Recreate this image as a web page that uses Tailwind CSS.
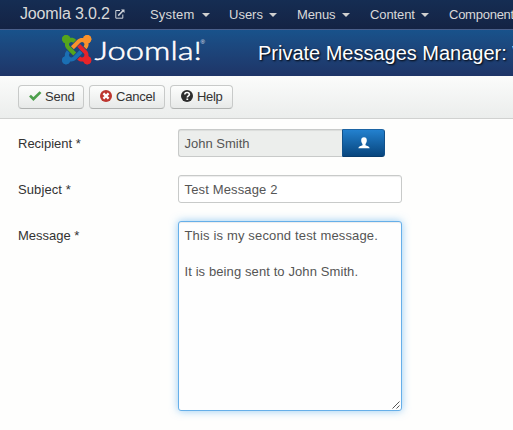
<!DOCTYPE html>
<html lang="en">
<head>
<meta charset="utf-8">
<title>Private Messages Manager</title>
<script src="https://cdn.jsdelivr.net/npm/@tailwindcss/browser@4"></script>
</head>
<body class="w-[513px] h-[430px] overflow-hidden bg-[#fefefd] font-['Liberation_Sans',sans-serif] text-[13px] leading-[18px] text-[#333]">
<nav class="flex h-[29px] w-full items-center overflow-hidden bg-linear-to-b from-[#152d53] to-[#142344] pl-5 text-[#d9d9d9]">
  <a class="flex w-[130px] shrink-0 items-center whitespace-nowrap text-[16px]"><span class="-mt-px tracking-[-0.15px]">Joomla 3.0.2</span>
    <svg class="ml-[5px] -mt-px" width="10" height="10" viewBox="0 0 10 10" fill="none" stroke="#d0d4da" stroke-width="1"><path d="M5 1.5H.8v7.7h7V5.5"/><path d="M3.2 6.6 8.5 1.3" stroke-width="1.5"/><path d="M6 .6h3.5V4z" fill="#d0d4da" stroke="none"/></svg></a>
  <a class="flex w-[79px] shrink-0 items-center gap-[7px]"><span class="tracking-[0.2px]">System</span><i class="border-x-4 border-t-4 border-x-transparent border-t-[#d0d0d0]"></i></a>
  <a class="flex w-[68px] shrink-0 items-center gap-[6px]"><span class="tracking-[0px]">Users</span><i class="border-x-4 border-t-4 border-x-transparent border-t-[#d0d0d0]"></i></a>
  <a class="flex w-[73px] shrink-0 items-center gap-[6px]"><span class="tracking-[-0.1px]">Menus</span><i class="border-x-4 border-t-4 border-x-transparent border-t-[#d0d0d0]"></i></a>
  <a class="flex w-[79px] shrink-0 items-center gap-[6px]"><span class="tracking-[-0.1px]">Content</span><i class="border-x-4 border-t-4 border-x-transparent border-t-[#d0d0d0]"></i></a>
  <a class="shrink-0 tracking-[-0.25px]">Component</a>
</nav>
<header class="flex h-[47px] w-full overflow-hidden border-t border-[#4a5f8b] bg-linear-to-b from-[#18528b] to-[#1e3567]">
  <svg class="ml-[60px] mt-[3px] shrink-0" width="150" height="36" viewBox="60 33 150 36">
    <defs><g id="arm"><circle cx="3.5" cy="20.5" r="3.4"/><path d="M16.719 14.759L14.22 17.26l-2.37 2.37-.462.466c-1.368 1.365-3.297 1.83-5.047 1.397-.327 1.424-1.604 2.49-3.13 2.49C1.438 23.983 0 22.547 0 20.772c0-1.518 1.055-2.789 2.469-3.123-.446-1.76.016-3.705 1.396-5.08l.179-.18 2.37 2.37-.184.181c-.769.779-.769 2.024 0 2.789.771.78 2.022.78 2.787 0l.465-.465 2.367-2.371 2.502-2.506z"/></g></defs>
    <g transform="translate(62 35) scale(1.225)">
      <use href="#arm" fill="#1b6fb3"/>
      <use href="#arm" fill="#55a51c" transform="rotate(90 12 12)"/>
      <use href="#arm" fill="#f9922c" transform="rotate(180 12 12)"/>
      <use href="#arm" fill="#e5242a" transform="rotate(270 12 12)"/>
    </g>
    <text transform="translate(94.500 59.700) scale(1.22 1)" x="0" y="0" font-family="Lato,sans-serif" font-weight="300" font-size="26" fill="#fff" stroke="#fff" stroke-width=".5" textLength="88" lengthAdjust="spacingAndGlyphs">Joomla!</text>
    <text x="200.500" y="43.500" font-family="Liberation Sans,sans-serif" font-size="6" fill="#e2e8f0">®</text>
  </svg>
  <h1 class="ml-[48px] mt-[9px] flex whitespace-nowrap text-[20px] leading-[28px] tracking-[-0.01px] text-white [text-shadow:1px_1px_2px_#000]">Private Messages Manager: W</h1>
</header>
<div class="flex h-[43px] gap-[5px] border-b border-[#d0d1d0] bg-linear-to-b from-[#fbfcfb] to-[#ebedec] pl-[18px] pt-[9px]">
  <button class="flex h-[24px] w-[66px] items-center rounded-[4px] border border-[#c8cac9] border-b-[#b0b2b1] bg-linear-to-b from-[#fdfefd] to-[#e7e9e8] pl-[10px]">
    <svg class="-mt-[2px] shrink-0" width="13" height="10" viewBox="0 0 13 10" fill="none" stroke="#4da04c" stroke-width="2.7"><path d="M1 4.6 4.4 8 11.5 1.1"/></svg><span class="ml-[3px] tracking-[-0.2px]">Send</span></button>
  <button class="flex h-[24px] w-[76px] items-center rounded-[4px] border border-[#c8cac9] border-b-[#b0b2b1] bg-linear-to-b from-[#fdfefd] to-[#e7e9e8] pl-[10px]">
    <svg class="-mt-[2px] shrink-0" width="12" height="12" viewBox="0 0 12 12"><circle cx="6" cy="6" r="6" fill="#bd362f"/><path d="m3.4 3.4 5.2 5.2m0-5.2L3.4 8.6" stroke="#fff" stroke-width="2.2"/></svg><span class="ml-[4px] tracking-[-0.2px]">Cancel</span></button>
  <button class="flex h-[24px] w-[63px] items-center rounded-[4px] border border-[#c8cac9] border-b-[#b0b2b1] bg-linear-to-b from-[#fdfefd] to-[#e7e9e8] pl-[10px]">
    <svg class="-mt-[2px] shrink-0" width="12" height="12" viewBox="0 0 12 12"><circle cx="6" cy="6" r="6" fill="#2d2d2d"/><path d="M3.8 4.6c0-3 4.6-2.7 4.6 0C8.4 6 6.3 5.9 6.3 7.5" fill="none" stroke="#fff" stroke-width="1.6"/><path d="M5.4 8.5h1.8V10H5.4z" fill="#fff"/></svg><span class="ml-[4px] tracking-[-0.3px]">Help</span></button>
</div>
<form class="flex flex-col gap-[18px] pl-[18px] pt-[10px]">
  <div class="flex h-[28px]"><label class="w-[160px] pt-[6px] tracking-[0px]">Recipient *</label>
    <div class="flex h-[28px] w-[164px] items-center rounded-l-[3px] border border-r-0 border-[#c8cac9] bg-[#eceeec] pl-[5.5px] pt-px tracking-[0px] text-[#555] shadow-[inset_0_1px_1px_rgba(0,0,0,0.075)]">John Smith</div>
    <div class="flex h-[28px] w-[43px] items-center justify-center rounded-r-[3px] border border-[#12518a] border-t-[#1c64a4] border-b-[#083c6c] bg-linear-to-b from-[#2381cf] to-[#08467e]">
      <svg class="-mt-px" width="12" height="12" viewBox="0 0 12 12" fill="#fff"><path d="M6 .3c1.900 0 2.800 1.200 2.800 3 0 1.600-.5 2.800-1.300 3.600v1.300c1.600.8 3.800 1 4.200 3H.3c.4-2 2.600-2.200 4.200-3V6.900C3.700 6.100 3.200 4.900 3.200 3.300c0-1.800.9-3 2.800-3z"/></svg>
    </div></div>
  <div class="flex h-[28px]"><label class="w-[160px] pt-[6px] tracking-[0.1px]">Subject *</label>
    <div class="flex h-[28px] w-[224px] items-center rounded-[3px] border border-[#c8cac9] bg-white pl-[5.5px] pt-px tracking-[0.15px] text-[#555] shadow-[inset_0_1px_1px_rgba(0,0,0,0.075)]">Test Message 2</div></div>
  <div class="flex h-[190px]"><label class="w-[160px] pt-[6px] tracking-[0px]">Message *</label>
    <div class="relative h-[190px] w-[224px] rounded-[3px] border border-[#66afe9] bg-[#fefefe] pl-[5.5px] pt-[5px] text-[#555] shadow-[inset_0_1px_1px_rgba(0,0,0,0.075),0_0_8px_rgba(82,168,236,0.6)]">
      <p class="whitespace-nowrap tracking-[0.16px]">This is my second test message.</p>
      <p class="mt-[18px] whitespace-nowrap tracking-[0.1px]">It is being sent to John Smith.</p>
      <svg class="absolute bottom-[1px] right-[1px]" width="8" height="8" viewBox="0 0 8 8" stroke="#555" stroke-width="1"><path d="M.5 7.5 7.5.5M4.5 7.5l3-3"/></svg>
    </div></div>
</form>
</body>
</html>
